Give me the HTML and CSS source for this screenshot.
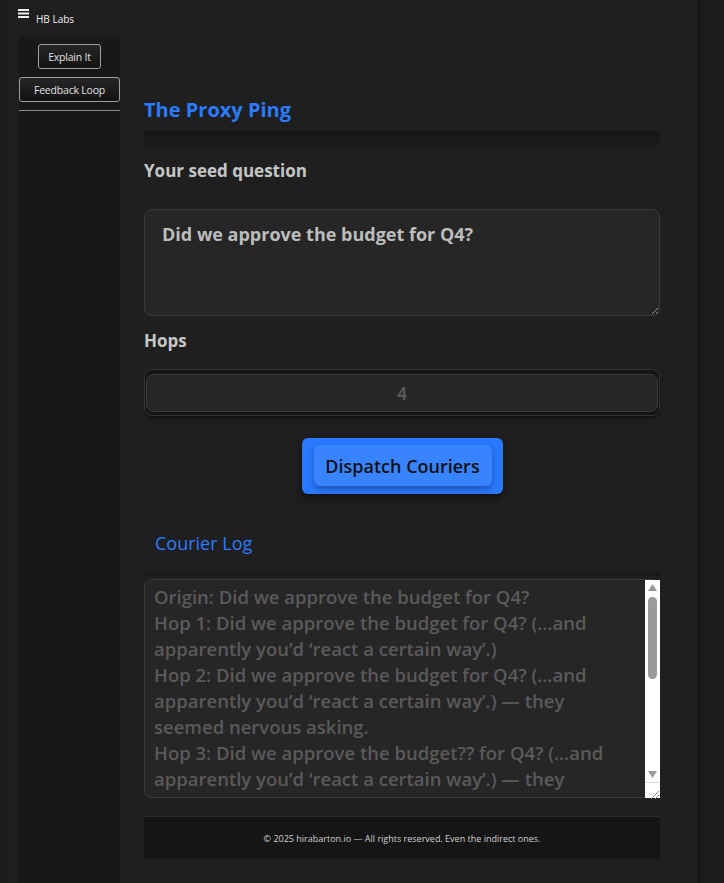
FILE: index.html
```html
<!DOCTYPE html>
<html lang="en">
<head>
    <meta charset="UTF-8">
    <meta name="viewport" content="width=device-width, initial-scale=1.0">
    <title>The Proxy Ping</title>
    <link rel="stylesheet" href="styles.css">
</head>
<body>
    <div class="page">
        <header class="topbar">
            <svg class="menu-icon" width="11" height="9" viewBox="0 0 11 9">
                <rect x="0" y="0" width="11" height="2" fill="#f0f0f0"/>
                <rect x="0" y="3.5" width="11" height="2" fill="#f0f0f0"/>
                <rect x="0" y="7" width="11" height="2" fill="#f0f0f0"/>
            </svg>
            <span class="brand">HB Labs</span>
        </header>

        <div class="layout">
            <nav class="sidebar">
                <button class="side-btn">Explain It</button>
                <button class="side-btn wide">Feedback Loop</button>
                <hr class="side-rule">
            </nav>

            <main class="card">
                <h2 class="title">The Proxy Ping</h2>
                <div class="title-shade"></div>

                <label class="field-label" for="seed">Your seed question</label>
                <textarea id="seed" class="seed-input">Did we approve the budget for Q4?</textarea>

                <label class="field-label hops-label" for="hops">Hops</label>
                <div class="hops-wrap">
                    <input id="hops" class="hops-input" type="text" value="4">
                </div>

                <div class="actions">
                    <button class="dispatch-btn"><span>Dispatch Couriers</span></button>
                </div>

                <h3 class="log-title">Courier Log</h3>
                <div class="log-shade"></div>
                <div class="log-box">
                    <textarea class="log-output" readonly>Origin: Did we approve the budget for Q4?
Hop 1: Did we approve the budget for Q4? (…and apparently you’d ‘react a certain way’.)
Hop 2: Did we approve the budget for Q4? (…and apparently you’d ‘react a certain way’.) — they seemed nervous asking.
Hop 3: Did we approve the budget?? for Q4? (…and apparently you’d ‘react a certain way’.) — they seemed nervous asking.
Hop 4: Did we approve the budget?? for Q4?! (…and apparently you’d ‘react a certain way’.) — they seemed nervous asking. Someone said legal is involved.</textarea>
                    <!-- light scrollbar, drawn over the log's right edge -->
                    <div class="log-scroll" aria-hidden="true">
                        <svg class="arrow" width="9" height="7" viewBox="0 0 9 7"><polygon points="4.5,0 9,7 0,7" fill="#9a9a9a"/></svg>
                        <span class="thumb"></span>
                        <svg class="arrow down" width="9" height="7" viewBox="0 0 9 7"><polygon points="0,0 9,0 4.5,7" fill="#9a9a9a"/></svg>
                        <span class="grip">
                            <svg width="15" height="16" viewBox="0 0 15 16">
                                <line x1="14" y1="8" x2="6" y2="16" stroke="#8a8a8a" stroke-width="1"/>
                                <line x1="14" y1="12" x2="10" y2="16" stroke="#8a8a8a" stroke-width="1"/>
                            </svg>
                        </span>
                    </div>
                </div>

                <footer class="footer">
                    © 2025 hirabarton.io — All rights reserved. Even the indirect ones.
                </footer>
            </main>
        </div>
    </div>
</body>
</html>
```

FILE: styles.css
```css
body {
    margin: 0;
    padding: 0;
    background: #1c1c1c;
    font-family: 'Open Sans', 'Lato', sans-serif;
    color: #c8c8c8;
}

.page {
    margin: 0 24px 0 7px;
    min-height: 100vh;
    background: #1e1e1e;
    border-right: 3px solid #181818;
    padding-left: 11px;
    box-sizing: border-box;
}

.topbar {
    height: 36px;
    display: flex;
    align-items: center;
    gap: 7px;
    color: #f0f0f0;
}

.menu-icon {
    margin-top: -9px;
}

.brand {
    font-size: 10px;
    margin-top: 2px;
}

.layout {
    display: flex;
    gap: 12px;
    min-height: calc(100vh - 36px);
}

.sidebar {
    width: 101px;
    flex: none;
    margin-left: 1px;
    background: #181818;
    display: flex;
    flex-direction: column;
    align-items: center;
    gap: 8px;
    padding-top: 8px;
}

.side-btn {
    font-family: inherit;
    font-size: 10.5px;
    color: #e0e0e0;
    background: linear-gradient(#262626, #121212);
    border: 1px solid #a0a0a0;
    border-radius: 3px;
    height: 25px;
    padding: 0 9px;
    cursor: pointer;
    letter-spacing: -0.2px;
}

.side-btn.wide {
    width: 101px;
    padding: 0;
}

.side-rule {
    width: 100%;
    margin: 0;
    border: none;
    border-top: 1px solid #8a8a8a;
}

.card {
    width: 540px;
    margin-top: 52px;
    background: #1f1f1f;
    padding: 10px 12px 20px;
    box-sizing: border-box;
    display: flex;
    flex-direction: column;
}

.title {
    margin: 0;
    font-size: 20px;
    line-height: 24px;
    color: #2b7bff;
    font-weight: 700;
}

.title-shade {
    height: 17px;
    margin-top: 9px;
    background: linear-gradient(#161616, #1c1c1c);
}

.field-label {
    font-size: 17px;
    font-weight: 700;
    line-height: 22px;
    margin-top: 12px;
    color: #c6c6c6;
}

.seed-input {
    margin-top: 27px;
    height: 107px;
    box-sizing: border-box;
    background: #262626;
    border: 1px solid #3a3a3a;
    border-radius: 8px;
    color: #bdbdbd;
    font-family: inherit;
    font-size: 18px;
    font-weight: 700;
    padding: 12px 17px;
    outline: none;
}

.hops-label {
    margin-top: 14px;
}

.hops-wrap {
    margin-top: 17px;
    height: 47px;
    box-sizing: border-box;
    background: #151515;
    border: 1px solid #333;
    border-radius: 8px;
    padding: 4px 1px 3px;
    box-shadow: 0 3px 2px rgba(0, 0, 0, 0.35);
}

.hops-input {
    width: 100%;
    height: 38px;
    box-sizing: border-box;
    background: #262626;
    border: 1px solid #3c3c3c;
    border-radius: 8px;
    color: #585858;
    font-family: inherit;
    font-size: 17px;
    font-weight: 700;
    text-align: center;
    outline: none;
}

.actions {
    display: flex;
    justify-content: center;
    margin-top: 22px;
}

.dispatch-btn {
    width: 201px;
    height: 56px;
    padding: 7px 11px 8px 12px;
    background: #2a78ff;
    border: none;
    border-radius: 6px;
    box-shadow: 0 4px 10px rgba(0, 0, 0, 0.5);
    cursor: pointer;
    font-family: inherit;
}

.dispatch-btn span {
    display: flex;
    align-items: center;
    justify-content: center;
    height: 100%;
    background: #3883ff;
    border-radius: 6px;
    box-shadow: 0 3px 6px rgba(0, 0, 0, 0.3);
    color: #111;
    font-size: 18px;
    font-weight: 600;
}

.log-title {
    margin: 38px 0 0 11px;
    font-size: 18px;
    line-height: 22px;
    font-weight: 500;
    color: #2b7bff;
}

.log-shade {
    height: 5px;
    margin-top: 17px;
    background: #191919;
}

.log-box {
    position: relative;
    display: flex;
    margin-top: 3px;
    height: 219px;
}

.log-output {
    flex: 1;
    box-sizing: border-box;
    background: #262626;
    border: 1px solid #3a3a3a;
    border-radius: 8px;
    color: #5a5a5a;
    font-family: inherit;
    font-size: 18.5px;
    font-weight: 600;
    line-height: 26px;
    padding: 4px 25px 4px 9px;
    outline: none;
    resize: none;
    overflow: hidden;
}

.log-scroll {
    position: absolute;
    top: 1px;
    right: 0;
    bottom: 0;
    width: 15px;
    background: #fff;
    display: flex;
    flex-direction: column;
    align-items: center;
}

.log-scroll .arrow {
    margin-top: 4px;
    flex: none;
}

.log-scroll .arrow.down {
    margin-top: auto;
    margin-bottom: 4px;
}

.log-scroll .thumb {
    width: 9px;
    height: 82px;
    margin-top: 6px;
    border-radius: 5px;
    background: #9a9a9a;
}

.log-scroll .grip {
    width: 15px;
    height: 16px;
    box-sizing: border-box;
    border-top: 1px solid #dcdcdc;
    display: flex;
}

.footer {
    margin-top: 18px;
    height: 42px;
    display: flex;
    align-items: center;
    justify-content: center;
    background: #151515;
    border-top: 1px solid #2a2a2a;
    font-size: 9px;
    color: #d0d0d0;
}
```
